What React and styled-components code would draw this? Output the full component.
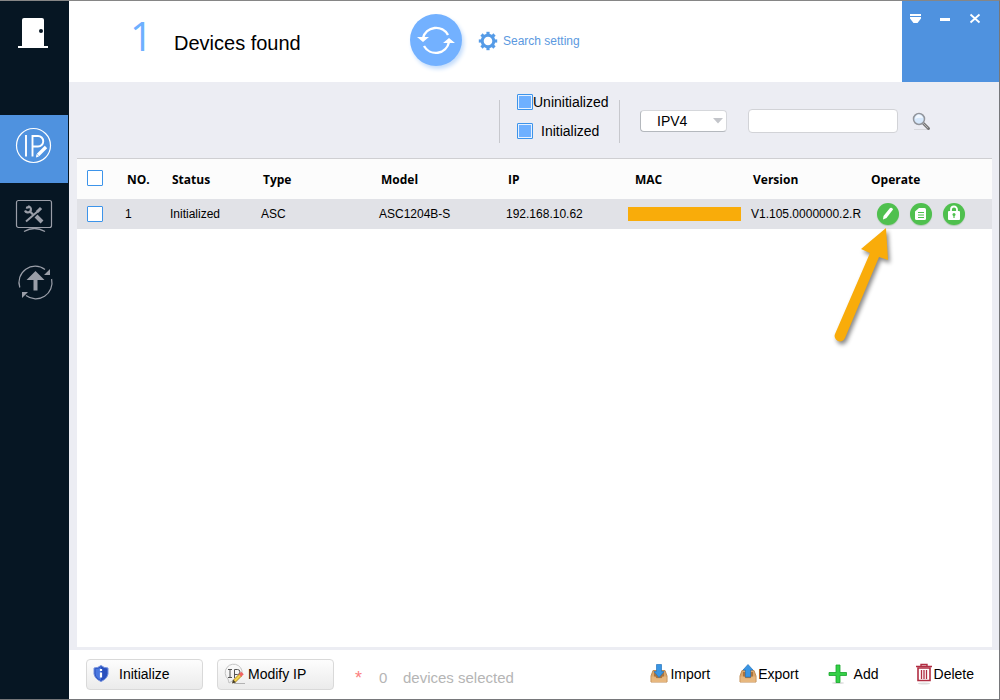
import React, { useState } from "react";
import styled, { createGlobalStyle } from "styled-components";

const GlobalStyle = createGlobalStyle`
  *, *::before, *::after { box-sizing: border-box; }
  body { margin: 0; background: #fff; color: #000; font-family: "Liberation Sans", Arial, sans-serif; font-size: 14px; line-height: 16px; }
  button, input, select { font: inherit; color: inherit; margin: 0; }
  svg { display: block; flex: none; }
`;

const Window = styled.div`
  display: flex;
  min-height: 100vh;
  border: 1px solid #76777a;
  border-top-color: #868686;
  border-left: 0;
  overflow: hidden;
`;

const Sidebar = styled.aside`
  flex: none;
  width: 69px;
  background: #061623;
`;

const Logo = styled.div`
  display: flex;
  justify-content: center;
  height: 114px;
  padding: 16px 3px 0 0;
`;

const NavButton = styled.button`
  display: flex;
  align-items: center;
  justify-content: center;
  width: 68px;
  height: 68px;
  padding: 0;
  border: 0;
  color: ${(p) => (p.$active ? "#fff" : "#9a9ea8")};
  background: ${(p) => (p.$active ? "#4f92df" : "transparent")};
`;

const Main = styled.div`
  display: flex;
  flex: 1;
  flex-direction: column;
  min-width: 0;
  background: #ecedf3;
`;

const Header = styled.header`
  display: flex;
  height: 81px;
  background: #fff;
`;

const Found = styled.h1`
  display: flex;
  flex: none;
  align-items: flex-start;
  width: 341px;
  margin: 0;
  padding: 11px 0 0 61px;
  font-size: 20px;
  font-weight: 400;
  line-height: 62px;
`;

const Count = styled.span`
  width: 44px;
  color: #6eb0ff;
  font-family: "Open Sans", "Segoe UI", sans-serif;
  font-size: 40px;
  line-height: 48px;
`;

const RefreshButton = styled.button`
  flex: none;
  width: 52px;
  height: 52px;
  margin-top: 13px;
  padding: 0;
  border: 0;
  border-radius: 50%;
  color: #fff;
  background: #73b1ff;
  box-shadow: 2px 3px 4px #c3dcfb;
`;

const SettingButton = styled.button`
  display: flex;
  align-items: center;
  gap: 5px;
  height: 26px;
  margin: 27px 0 0 16px;
  padding: 0;
  border: 0;
  color: #5b99e0;
  background: none;
  font-size: 12px;
  white-space: nowrap;
`;

const WindowControls = styled.div`
  display: flex;
  gap: 10px;
  width: 97px;
  margin-left: auto;
  padding: 8px 0 0 4px;
  background: #4f92df;
`;

const WindowButton = styled.button`
  width: 20px;
  height: 20px;
  padding: 0;
  border: 0;
  color: #fff;
  background: none;
`;

const Filters = styled.form`
  display: flex;
  align-items: center;
  justify-content: flex-end;
  height: 76px;
  padding-right: 68px;
`;

const Divider = styled.div`
  width: 1px;
  height: 43px;
  margin-top: 2px;
  background: #c7c8cd;
`;

const StateFilter = styled.div`
  display: flex;
  flex-direction: column;
  gap: 13px;
  width: 119px;
  margin-bottom: 8px;
  padding-left: 17px;
`;

const StateLabel = styled.label`
  display: flex;
  align-items: center;
  gap: ${(p) => p.$gap}px;
  height: 16px;
  white-space: nowrap;
`;

const Check = styled.input.attrs({ type: "checkbox" })`
  display: block;
  flex: none;
  appearance: none;
  width: 16px;
  height: 16px;
  border: 1px solid #3d94ea;
  border-radius: 1px;
  background: #fff;

  &:checked {
    background: #6eb0ff;
    box-shadow: inset 0 0 0 1px #e6f1ff;
  }
`;

const SelectBox = styled.div`
  display: grid;
  align-items: center;
  width: 87px;
  margin: 0 21px 0 20px;
  padding-top: 2px;

  & > * { grid-area: 1 / 1; }
  & > svg { justify-self: end; margin-right: 4px; pointer-events: none; }
`;

const Select = styled.select`
  appearance: none;
  width: 100%;
  height: 22px;
  padding: 0 16px;
  border: 1px solid #b4b8bd;
  border-top-color: #d5d7db;
  border-right-color: #d5d7db;
  border-radius: 4px;
  background: #fff;
`;

const SearchInput = styled.input`
  width: 150px;
  height: 24px;
  margin: 2px 14px 0 0;
  padding: 0 6px;
  border: 1px solid #d2d3d7;
  border-radius: 4px;
  background: #fff;
`;

const PlainButton = styled.button`
  padding: 2px 0 0;
  border: 0;
  background: none;
`;

const Panel = styled.main`
  flex: 1;
  margin: 0 7px 3px 8px;
  border-top: 1px solid #cfcfd2;
  background: #fff;
`;

const Table = styled.table`
  width: 100%;
  border-collapse: collapse;
  table-layout: fixed;
  font-size: 12px;
  text-align: left;
  white-space: nowrap;
`;

const Col = styled.col`
  width: ${(p) => p.$width};
`;

const HeadRow = styled.tr`
  height: 40px;
  background: #fcfcfc;
`;

const HeadCell = styled.th`
  padding: 1px 0 0 ${(p) => p.$inset || 2}px;
  font-family: "Open Sans", "Segoe UI", sans-serif;
  font-size: 12px;
  font-weight: 700;
`;

const CheckCell = styled.td`
  padding: 0 0 ${(p) => (p.$head ? 2 : 0)}px 10px;
`;

const Row = styled.tr`
  height: 30px;
  background: #e1e2e7;
`;

const Cell = styled.td`
  padding: 0;
`;

const Redacted = styled.div`
  width: 113px;
  height: 14px;
  background: #f9ac0a;
`;

const Operations = styled.div`
  position: relative;
  display: flex;
  gap: 11px;
  padding-left: 8px;
`;

const RoundButton = styled.button`
  width: 22px;
  height: 22px;
  padding: 0;
  border: 0;
  border-radius: 50%;
  color: #fff;
  background: #4fc04e;
  box-shadow: 0 1px 1px #b1c8b5;
`;

const Pointer = styled.svg`
  position: absolute;
  top: 21px;
  left: -42px;
  pointer-events: none;
  filter: drop-shadow(2px 3px 2px #0007);
`;

const Footer = styled.footer`
  display: flex;
  align-items: center;
  height: 49px;
  padding: 0 25px 1px 17px;
  background: #fff;
`;

const FooterButton = styled.button`
  display: flex;
  align-items: center;
  gap: ${(p) => p.$gap}px;
  width: 117px;
  height: 31px;
  margin-right: 14px;
  padding: 0 0 0 ${(p) => p.$inset}px;
  border: 1px solid #d9d9d9;
  border-radius: 4px;
  background: linear-gradient(#fdfdfd, #ebebeb);
  white-space: nowrap;
`;

const Selected = styled.p`
  display: flex;
  margin: 7px 0 0 7px;
  color: #b5b5b5;
  font-size: 15px;
  white-space: nowrap;
`;

const Star = styled.span`
  width: 24px;
  color: #fb7f80;
  font-size: 18px;
`;

const Zero = styled.span`
  width: 24px;
`;

const Actions = styled.div`
  display: flex;
  gap: 29px;
  margin-left: auto;
`;

const Action = styled.button`
  display: flex;
  align-items: center;
  gap: ${(p) => p.$gap}px;
  height: 24px;
  padding: 0 0 0 ${(p) => p.$inset || 0}px;
  border: 0;
  background: none;
  white-space: nowrap;
`;

const DoorIcon = () => (
  <svg width="32" height="32" viewBox="0 0 32 32">
    <path d="M5 3q0-2 2-2h18q2 0 2 2v26h4v2H1v-2h4z" fill="#fff" />
    <circle cx="24" cy="14" r="2" fill="#061623" />
  </svg>
);

const IpIcon = () => (
  <svg width="44" height="44" viewBox="0 0 44 44" fill="none" stroke="currentColor">
    <circle cx="21.500" cy="18.500" r="17" strokeWidth="1.200" />
    <path d="M14 8v21.500M20.500 29.500V9h5.500a5 5 0 0 1 0 10.500h-5" strokeWidth="1.900" />
    <path d="M26 28l8-8" strokeWidth="3.400" />
    <path d="M24.500 27l2.500 2.500-3 1z" fill="currentColor" stroke="none" />
  </svg>
);

const ToolsIcon = () => (
  <svg width="44" height="44" viewBox="0 0 44 44" fill="none" stroke="currentColor">
    <rect x="4.500" y="5.500" width="35" height="27" rx="2" strokeWidth="1.200" />
    <path d="M12 36.500q10.500-6 21 0" strokeWidth="1.300" />
    <path d="M14 26.500l15-13" strokeWidth="2" />
    <path d="M14 12.500a3 3 0 0 0 3-1 3 3 0 0 1 1 5 3 3 0 0 1-5-1M18 16.500l3 3" strokeWidth="2.200" />
    <path d="M24 21l6 6" strokeWidth="4" />
    <path d="M25 17l4-4" strokeWidth="3" />
  </svg>
);

const UpgradeIcon = () => (
  <svg width="44" height="44" viewBox="0 0 44 44" fill="none" stroke="currentColor">
    <path d="M7.800 24.500A16.200 16.200 0 0 1 33 6.500M39.600 16A16.200 16.200 0 0 1 14 32.500" strokeWidth="1.200" />
    <path d="M38 6v6h-6zM10 35v-6h6z" fill="currentColor" stroke="none" />
    <path d="M23.500 8l9 9h-7v10.500h-4V17h-7z" fill="currentColor" stroke="none" />
  </svg>
);

const RefreshIcon = () => (
  <svg width="52" height="52" viewBox="0 0 52 52" fill="none" stroke="#fff" strokeWidth="2.400">
    <path d="M13 24A13.500 13.500 0 0 1 38 21M39 28A13.500 13.500 0 0 1 14 32" />
    <path d="M7 23h12l-6 5zM33 29h12l-6-5z" fill="#fff" stroke="none" />
  </svg>
);

const GearIcon = () => (
  <svg width="20" height="20" viewBox="0 0 20 20" fill="none" stroke="#559be7">
    <circle cx="10" cy="10" r="5.800" strokeWidth="3" />
    {[0, 45, 90, 135, 180, 225, 270, 315].map((a) => (
      <path key={a} d="M10 .8v3" strokeWidth="3.200" transform={`rotate(${a} 10 10)`} />
    ))}
  </svg>
);

const MenuIcon = () => (
  <svg width="20" height="20" viewBox="0 0 20 20" fill="#fff">
    <path d="M4 5h11v2H4zM4 8h11v1.500L11.500 14h-4L4 9.500z" />
  </svg>
);

const MinimizeIcon = () => (
  <svg width="20" height="20" viewBox="0 0 20 20" fill="#fff">
    <path d="M4 9h10v3H4z" />
  </svg>
);

const CloseIcon = () => (
  <svg width="20" height="20" viewBox="0 0 20 20" stroke="#fff" strokeWidth="1.800">
    <path d="M4.500 5.500l9 8M13.500 5.500l-9 8" />
  </svg>
);

const MagnifierIcon = () => (
  <svg width="19" height="19" viewBox="0 0 19 19" fill="none">
    <path d="M2 17.500h14" stroke="#d7d8dc" />
    <path d="M11.500 11.500l5 5" stroke="#777" strokeWidth="3" strokeLinecap="round" />
    <path d="M11 11l5 5" stroke="#b5b5b5" strokeWidth="1" />
    <circle cx="7" cy="7" r="5.500" fill="#d6e8fb" stroke="#92959b" strokeWidth="1.500" />
    <path d="M3 7q4-2 8-1-1-3-4-3.500-3 0-4 4.500z" fill="#f2f8ff" />
  </svg>
);

const PencilIcon = () => (
  <svg width="22" height="22" viewBox="0 0 22 22" fill="#fff">
    <path d="M6.500 13l6.500-8q2.500-1 3 1.500l-6.500 8.500-3.500 1.500z" />
  </svg>
);

const DocumentIcon = () => (
  <svg width="22" height="22" viewBox="0 0 22 22">
    <path d="M9 5h5.500q1.500 0 1.500 1.500v9q0 1.500-1.500 1.500h-8Q5 17 5 15.500V8.500z" fill="#fff" />
    <path d="M8 9.500h6M8 12h6M8 14.500h6" stroke="#4fc04e" />
  </svg>
);

const LockIcon = () => (
  <svg width="22" height="22" viewBox="0 0 22 22">
    <path d="M8 9V6.500a3 3 0 0 1 6 0V9" fill="none" stroke="#fff" strokeWidth="1.800" />
    <rect x="5" y="8" width="12" height="9" rx="1" fill="#fff" />
    <path d="M11 11v4" stroke="#4fc04e" strokeWidth="1.200" />
    <circle cx="11" cy="11.500" r="1.500" fill="#4fc04e" />
  </svg>
);

const ShieldIcon = () => (
  <svg width="16" height="18" viewBox="0 0 16 18">
    <path d="M1 3q4 0 7-2.500Q11 3 15 3v6q-1 5-7 7.500Q2 14 1 9z" fill="#2a50bd" stroke="#7492e0" />
    <path d="M8 2v13Q3 13 2.500 9V4Q6 4 8 2z" fill="#4a78e0" />
    <path d="M8 4v2M8 7.500v5" stroke="#fff" strokeWidth="2.200" />
  </svg>
);

const ModifyIcon = () => (
  <svg width="22" height="22" viewBox="0 0 22 22" fill="none">
    <path d="M4 16a8.500 8.500 0 1 1 13-2M4 16l1 4 4-2.500" stroke="#c4c4c4" />
    <path d="M4 6.500h4M6 6.500v8M4 14.500h4M10.500 15V6.500h3a2.500 2.500 0 0 1 0 5h-3" stroke="#555" />
    <path d="M10 20.500h11" stroke="#b3b3b3" />
    <path d="M10.500 18l6-6" stroke="#a67b16" strokeWidth="3.600" />
    <path d="M10.500 18l6-6" stroke="#f3d450" strokeWidth="2.400" />
    <path d="M16 12.500l2.500-2.500" stroke="#ef6262" strokeWidth="3.600" />
    <path d="M8 20.500l1-4 3 3z" fill="#4b4026" />
  </svg>
);

const TrayIcon = ({ up }) => (
  <svg width="18" height="20" viewBox="0 0 18 20">
    <path d="M3 6.500h12l2 5.500v6H1v-6z" fill="#dba66a" stroke="#c18c52" />
    <path d="M4 8h10v6H4z" fill="#a8733f" />
    <path d="M1.500 12.500h4l1 2h5l1-2h4V18h-15z" fill="#e7b77e" />
    <path
      d={up ? "M9 .5l5 5.500h-2.500v7h-5V6H4z" : "M6.500.5h5v7H14l-5 6-5-6h2.500z"}
      fill="#3995e4"
      stroke="#2675bd"
      strokeWidth=".7"
    />
  </svg>
);

const PlusIcon = () => (
  <svg width="20" height="20" viewBox="0 0 20 20">
    <ellipse cx="10" cy="19" rx="6" ry="1" fill="#ddd" />
    <path d="M8 1h4v7.500h6.500v3H12V18.500H8v-7H1v-3h7z" fill="#35d047" stroke="#17a52b" strokeWidth=".8" />
  </svg>
);

const TrashIcon = () => (
  <svg width="18" height="22" viewBox="0 0 18 22" fill="none" stroke="#b12d42">
    <ellipse cx="9" cy="20.500" rx="6" ry="1" fill="#ddd" stroke="none" />
    <path d="M1 3.500h16M6 3V1.500h6V3" strokeWidth="1.400" />
    <path d="M3 5h12v12.500H3z" strokeWidth="1.600" />
    <path d="M6.500 7v9M9 7v9M11.500 7v9" strokeWidth="1.300" />
  </svg>
);

export default function App() {
  const [uninitialized, setUninitialized] = useState(true);
  const [initialized, setInitialized] = useState(true);

  return (
    <>
      <GlobalStyle />
      <Window>
        <Sidebar>
          <Logo><DoorIcon /></Logo>
          <nav>
            <NavButton $active aria-label="Modify IP addresses"><IpIcon /></NavButton>
            <NavButton aria-label="Device configuration"><ToolsIcon /></NavButton>
            <NavButton aria-label="Device upgrade"><UpgradeIcon /></NavButton>
          </nav>
        </Sidebar>
        <Main>
          <Header>
            <Found><Count>1</Count>Devices found</Found>
            <RefreshButton aria-label="Refresh"><RefreshIcon /></RefreshButton>
            <SettingButton><GearIcon />Search setting</SettingButton>
            <WindowControls>
              <WindowButton aria-label="Menu"><MenuIcon /></WindowButton>
              <WindowButton aria-label="Minimize"><MinimizeIcon /></WindowButton>
              <WindowButton aria-label="Close"><CloseIcon /></WindowButton>
            </WindowControls>
          </Header>
          <Filters onSubmit={(e) => e.preventDefault()}>
            <Divider />
            <StateFilter>
              <StateLabel $gap={0}>
                <Check checked={uninitialized} onChange={(e) => setUninitialized(e.target.checked)} />
                Uninitialized
              </StateLabel>
              <StateLabel $gap={8}>
                <Check checked={initialized} onChange={(e) => setInitialized(e.target.checked)} />
                Initialized
              </StateLabel>
            </StateFilter>
            <Divider />
            <SelectBox>
              <Select aria-label="IP version" defaultValue="IPV4">
                <option>IPV4</option>
                <option>IPV6</option>
              </Select>
              <svg width="10" height="6" viewBox="0 0 10 6"><path d="M0 0h10L5 5.500z" fill="#c3c5ca" /></svg>
            </SelectBox>
            <SearchInput type="text" aria-label="Search" />
            <PlainButton aria-label="Search"><MagnifierIcon /></PlainButton>
          </Filters>
          <Panel>
            <Table>
              <colgroup>
                <Col $width="48px" />
                <Col $width="45px" />
                <Col $width="91px" />
                <Col $width="118px" />
                <Col $width="127px" />
                <Col $width="122px" />
                <Col $width="123px" />
                <Col $width="118px" />
                <Col $width="auto" />
              </colgroup>
              <thead>
                <HeadRow>
                  <CheckCell $head><Check aria-label="Select all devices" /></CheckCell>
                  <HeadCell>NO.</HeadCell>
                  <HeadCell>Status</HeadCell>
                  <HeadCell>Type</HeadCell>
                  <HeadCell>Model</HeadCell>
                  <HeadCell>IP</HeadCell>
                  <HeadCell $inset={7}>MAC</HeadCell>
                  <HeadCell>Version</HeadCell>
                  <HeadCell>Operate</HeadCell>
                </HeadRow>
              </thead>
              <tbody>
                <Row>
                  <CheckCell><Check aria-label="Select device 1" /></CheckCell>
                  <Cell>1</Cell>
                  <Cell>Initialized</Cell>
                  <Cell>ASC</Cell>
                  <Cell>ASC1204B-S</Cell>
                  <Cell>192.168.10.62</Cell>
                  <Cell><Redacted /></Cell>
                  <Cell>V1.105.0000000.2.R</Cell>
                  <Cell>
                    <Operations>
                      <RoundButton aria-label="Edit"><PencilIcon /></RoundButton>
                      <RoundButton aria-label="Details"><DocumentIcon /></RoundButton>
                      <RoundButton aria-label="Password"><LockIcon /></RoundButton>
                      <Pointer width="70" height="125" viewBox="0 0 70 125">
                        <path d="M59 4l2 32-9-3-34 81a5 5 0 0 1-10-4l35-81-9-4z" fill="#f9ac0a" />
                      </Pointer>
                    </Operations>
                  </Cell>
                </Row>
              </tbody>
            </Table>
          </Panel>
          <Footer>
            <FooterButton $inset={6} $gap={10}><ShieldIcon />Initialize</FooterButton>
            <FooterButton $inset={6} $gap={2}><ModifyIcon />Modify IP</FooterButton>
            <Selected><Star>*</Star><Zero>0</Zero>devices selected</Selected>
            <Actions>
              <Action $gap={2}><TrayIcon />Import</Action>
              <Action $gap={1}><TrayIcon up />Export</Action>
              <Action $gap={6}><PlusIcon />Add</Action>
              <Action $gap={1} $inset={7}><TrashIcon />Delete</Action>
            </Actions>
          </Footer>
        </Main>
      </Window>
    </>
  );
}
